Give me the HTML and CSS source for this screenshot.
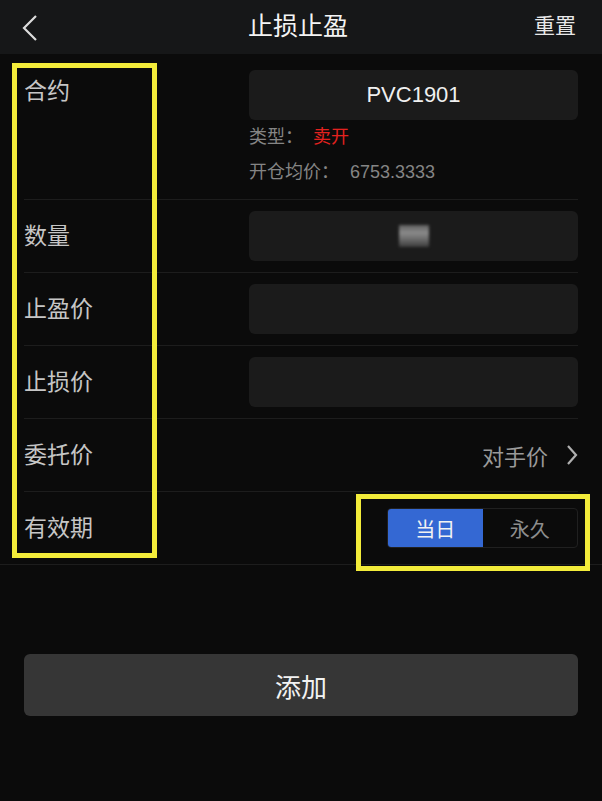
FILE: index.html
```html
<!DOCTYPE html>
<html lang="zh-CN">
<head>
    <meta charset="UTF-8">
    <title>止损止盈</title>
    <link rel="stylesheet" href="styles.css">
</head>
<body>
<header class="nav">
    <a class="nav_back" href="javascript:void(0)">
        <svg width="20" height="28" viewBox="0 0 20 28"><polyline points="16,2 4,14 16,26" fill="none" stroke="#dcdcdc" stroke-width="2.2"/></svg>
    </a>
    <h1 class="nav_title">止损止盈</h1>
    <a class="nav_reset" href="javascript:void(0)">重置</a>
</header>
<section class="form">
    <div class="row row_first">
        <span class="label">合约</span>
        <div class="field">
            <div class="box box_text">PVC1901</div>
            <p class="info">类型：<span class="sell">卖开</span></p>
            <p class="info">开仓均价：<span class="price">6753.3333</span></p>
        </div>
    </div>
    <div class="row">
        <span class="label">数量</span>
        <div class="box"><i class="mosaic"></i></div>
    </div>
    <div class="row">
        <span class="label">止盈价</span>
        <div class="box"></div>
    </div>
    <div class="row">
        <span class="label">止损价</span>
        <div class="box"></div>
    </div>
    <div class="row">
        <span class="label">委托价</span>
        <a class="pick" href="javascript:void(0)">对手价
            <svg width="12" height="22" viewBox="0 0 12 22"><polyline points="2,2 10,11 2,20" fill="none" stroke="#b0b0b0" stroke-width="2.2"/></svg>
        </a>
    </div>
    <div class="row row_last">
        <span class="label">有效期</span>
        <div class="seg">
            <span class="seg_item on">当日</span>
            <span class="seg_item">永久</span>
        </div>
    </div>
</section>
<div class="submit">
    <button type="button" class="btn">添加</button>
</div>
<div class="mark mark_left"></div>
<div class="mark mark_right"></div>
</body>
</html>
```

FILE: styles.css
```css
*{box-sizing:border-box;}
html,body{margin:0;padding:0;}
body{
    position:relative;
    width:602px;
    min-height:801px;
    background:#0b0b0b;
    font-family:"Liberation Sans","Noto Sans CJK SC",sans-serif;
    color:#c4c4c4;
}
a{text-decoration:none;color:inherit;}
p{margin:0;}

/* top bar */
.nav{display:flex;align-items:center;justify-content:space-between;height:54px;padding:0 26px 0 20px;background:#161718;}
.nav_back{display:flex;width:60px;padding-top:2px;}
.nav_title{margin:0 0 7px;font-size:25px;font-weight:normal;color:#f4f4f4;}
.nav_reset{width:60px;margin-bottom:7px;text-align:right;font-size:21px;color:#e8e8e8;}

/* form rows */
.row{display:flex;align-items:center;justify-content:space-between;height:73px;margin:0 24px;border-bottom:1px solid #1d1d1d;}
.row_first{align-items:flex-start;height:146px;padding:16px 0 12px;}
.row_first .label{line-height:42px;}
.row_last{margin:0;padding:0 24px;}
.label{font-size:23px;line-height:50px;color:#c6c6c6;}
.field{width:329px;}
.box{width:329px;height:50px;border-radius:6px;background:#1b1b1b;display:flex;align-items:center;justify-content:center;}
.box_text{font-size:22px;color:#f0f0f0;}
.info{font-size:18px;line-height:35px;color:#858585;}
.sell{margin-left:10px;color:#e3221f;}
.price{margin-left:11px;}
.mosaic{display:block;width:30px;height:22px;background:linear-gradient(#5f5f5f,#8a8a8a 35%,#6a6a6a 65%,#3c3c3c);filter:blur(1.6px);}

.pick{display:flex;align-items:center;gap:18px;font-size:22px;color:#9a9a9a;}

.seg{display:flex;width:191px;height:40px;border:1px solid #202020;border-radius:4px;overflow:hidden;}
.seg_item{flex:1;display:flex;align-items:center;justify-content:center;font-size:20px;color:#8e8e8e;}
.seg_item.on{background:#3468d3;color:#f2f2f2;}

/* bottom button */
.submit{padding:89px 24px 0;}
.btn{display:block;width:100%;height:62px;border:0;border-radius:6px;background:#363636;color:#f2f2f2;font-family:inherit;font-size:26px;}

/* yellow annotation frames */
.mark{position:absolute;border:5px solid #f3ec3a;}
.mark_left{left:12px;top:63px;width:145px;height:495px;}
.mark_right{left:356px;top:494px;width:234px;height:77px;}
```
